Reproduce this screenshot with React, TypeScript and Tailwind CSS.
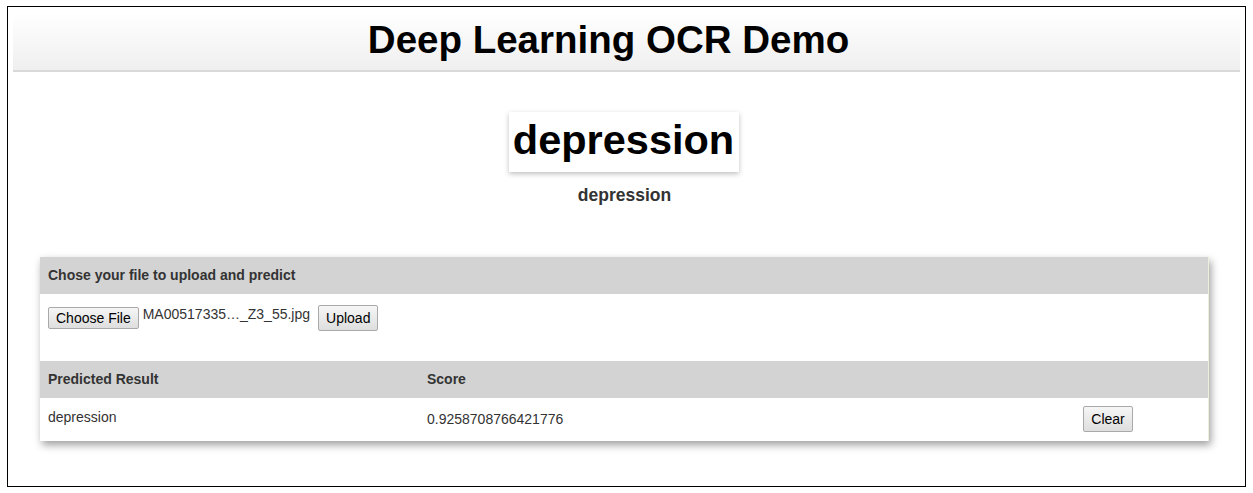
export default function App() {
  return (
    <div className="w-[1253px] h-[493px] bg-white p-[6px_7px] font-['Liberation_Sans',Arial,sans-serif] text-[#333]">
      <div className="w-[1239px] h-[481px] border border-black px-[5px] pt-[6px]">
        {/* header band */}
        <div className="h-[59px] bg-gradient-to-b from-white to-[#efefef] border-b-2 border-[#d9d9d9] flex items-center justify-center">
          <h1 className="text-[38.5px] font-bold text-black leading-none pb-[2px] pr-[36px]">Deep Learning OCR Demo</h1>
        </div>

        {/* preview */}
        <div className="flex flex-col items-center mt-[40px]">
          <div className="w-[230px] h-[60px] mr-[6px] bg-white shadow-[0_2px_5px_rgba(0,0,0,0.25)] flex items-center justify-center">
            <span className="text-[41.5px] font-bold text-black leading-none font-['Liberation_Sans',Arial,sans-serif] pb-[4px]">
              depression
            </span>
          </div>
          <div className="mt-[15px] mr-[4px] text-[17.5px] font-bold text-[#333] leading-none">depression</div>
        </div>

        {/* panel */}
        <div className="ml-[27px] w-[1169px] mt-[52px] bg-white shadow-[2px_4px_8px_rgba(0,0,0,0.38)] border-r border-[#eeeedd] text-[14px]">
          <div className="h-[37px] bg-[#d3d3d3] flex items-center px-[8px] font-bold">Chose your file to upload and predict</div>
          <div className="h-[67px] px-[8px] pt-[13px] flex items-start gap-[4px]">
            <button className="h-[22px] px-[7px] border border-[#a9a9a9] rounded-[2px] bg-gradient-to-b from-[#f6f6f6] to-[#dedede] text-[14px] text-black leading-none">Choose File</button>
            <span className="text-[14px] text-[#333] leading-none">MA00517335…_Z3_55.jpg</span>
            <button className="h-[26px] px-[7px] border border-[#a9a9a9] rounded-[2px] bg-gradient-to-b from-[#f6f6f6] to-[#dedede] text-[14px] text-black leading-none ml-[4px] -mt-[2px]">Upload</button>
          </div>
          <div className="h-[37px] bg-[#d3d3d3] grid grid-cols-[379px_1fr] items-center px-[8px] font-bold">
            <span>Predicted Result</span>
            <span>Score</span>
          </div>
          <div className="h-[43px] grid grid-cols-[379px_656px_1fr] px-[8px] text-[14px]">
            <span className="pt-[9px]">depression</span>
            <span className="pt-[11px]">0.9258708766421776</span>
            <div className="pt-[8px]">
              <button className="h-[26px] w-[50px] border border-[#a9a9a9] rounded-[2px] bg-gradient-to-b from-[#f6f6f6] to-[#dedede] text-[14px] text-black leading-none">Clear</button>
            </div>
          </div>
        </div>
      </div>
    </div>
  );
}
